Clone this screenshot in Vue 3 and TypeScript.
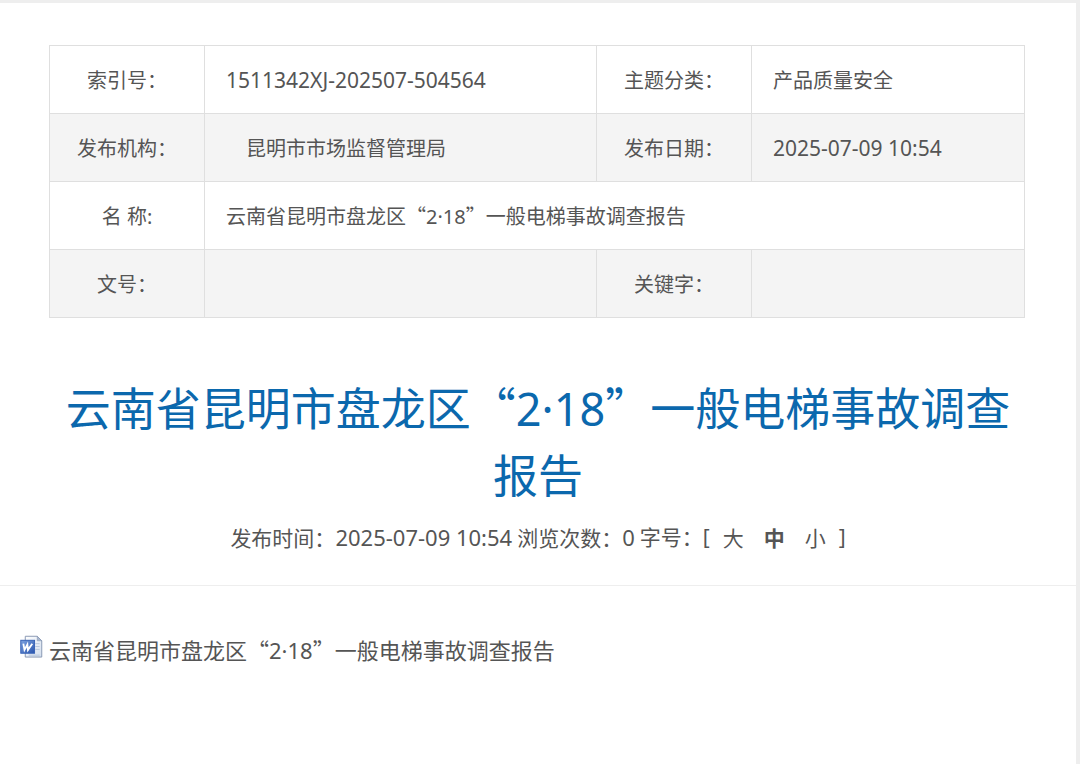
<script setup lang="ts">
import { ref } from 'vue'

interface TextPart {
  text: string
  quote?: boolean
}

// Curly quotes take the full-width form of the Chinese font.
const titleParts: TextPart[] = [
  { text: '云南省昆明市盘龙区' },
  { text: '“', quote: true },
  { text: '2·18' },
  { text: '”', quote: true },
  { text: '一般电梯事故调查' },
  { text: '报告' },
]

const sizes = ['大', '中', '小']
const currentSize = ref('中')
</script>

<template>
  <main class="page" lang="zh-CN">
    <table class="info">
      <colgroup>
        <col class="col-label" />
        <col class="col-wide" />
        <col class="col-label" />
        <col class="col-value" />
      </colgroup>
      <tbody>
        <tr>
          <th scope="row">索引号：</th>
          <td class="code">1511342XJ-202507-504564</td>
          <th scope="row">主题分类：</th>
          <td>产品质量安全</td>
        </tr>
        <tr>
          <th scope="row">发布机构：</th>
          <td class="indented">昆明市市场监督管理局</td>
          <th scope="row">发布日期：</th>
          <td class="code">2025-07-09 10:54</td>
        </tr>
        <tr>
          <th scope="row">名 称:</th>
          <td colspan="3">
            <span v-for="(part, i) in titleParts" :key="i" :class="{ quote: part.quote }">{{ part.text }}</span>
          </td>
        </tr>
        <tr>
          <th scope="row">文号：</th>
          <td></td>
          <th scope="row">关键字：</th>
          <td></td>
        </tr>
      </tbody>
    </table>

    <header class="heading">
      <h1>
        <span v-for="(part, i) in titleParts" :key="i" :class="{ quote: part.quote }">{{ part.text }}</span>
      </h1>
      <div class="meta">
        <span>发布时间：<span class="number">2025-07-09 10:54</span></span>
        <span>浏览次数：<span class="number">0</span></span>
        <span class="sizes">
          <span>字号：[</span>
          <span class="size-list">
            <button
              v-for="size in sizes"
              :key="size"
              type="button"
              :class="{ active: size === currentSize }"
              @click="currentSize = size"
            >{{ size }}</button>
          </span>
          <span>]</span>
        </span>
      </div>
    </header>

    <section class="content">
      <a class="attachment" href="#">
        <svg class="doc-icon" viewBox="0 0 24 24" aria-hidden="true">
          <defs>
            <linearGradient id="paper" x1="0" y1="0" x2="1" y2="1">
              <stop offset="0" stop-color="#ffffff" />
              <stop offset="1" stop-color="#d3deee" />
            </linearGradient>
            <linearGradient id="badge" x1="0" y1="0" x2="1" y2="1">
              <stop offset="0" stop-color="#7da3e0" />
              <stop offset="1" stop-color="#2a55ae" />
            </linearGradient>
          </defs>
          <path d="M5.500 .8H18l4.700 4.700V22.500H5.500z" fill="url(#paper)" stroke="#8797b2" />
          <path d="M18 .8v4.700h4.700z" fill="#a9b8cf" stroke="#8797b2" stroke-width=".6" />
          <path d="M16 8.500h4.500M16 11.500h4.500M16 14.500h4.500M9 20.500h11.500" stroke="#b6c5dd" />
          <rect x=".8" y="5" width="14.400" height="13.500" fill="url(#badge)" stroke="#3560b5" />
          <path d="M3.500 8.500l1.200 6.500 3-5.500.6 5.500L12.800 8.500" fill="none" stroke="#fff" stroke-width="1.900" />
        </svg>
        <span>
          <span v-for="(part, i) in titleParts" :key="i" :class="{ quote: part.quote }">{{ part.text }}</span>
        </span>
      </a>
    </section>
  </main>
</template>

<style>
body {
  background: #eeeeee;
}
</style>

<style scoped>
.page {
  box-sizing: border-box;
  min-height: calc(100vh - 3px);
  margin: 3px 4px 0 0;
  padding-top: 42px;
  display: flow-root;
  background: #fff;
  color: #555;
  font-family: "Noto Sans", "Noto Sans CJK SC", sans-serif;
  font-size: 20px;
}

.quote {
  font-family: "Noto Sans CJK SC", sans-serif;
}

.info {
  width: calc(100% - 100px);
  margin: 0 49px;
  border-collapse: collapse;
  table-layout: fixed;
  line-height: 28px;
}

.col-label {
  width: 15.9%;
}

.col-wide {
  width: 40.2%;
}

.info th,
.info td {
  height: 65px;
  padding: 2px 0 0;
  border: 1px solid #dfdfdf;
  font-weight: 400;
}

.info td {
  padding: 2px 21px 0;
}

.info td.code {
  padding-top: 0;
  font-size: 21px;
}

.info td.indented {
  padding-left: 41px;
}

.info tr:nth-child(even) {
  background: #f4f4f4;
}

.heading {
  margin-top: 55px;
  padding: 0 50px 31px;
  border-bottom: 1px solid #eee;
  text-align: center;
}

h1 {
  margin: 0;
  color: #0b68ad;
  font-size: 45px;
  font-weight: 400;
  line-height: 67px;
}

.meta {
  display: flex;
  justify-content: center;
  gap: 5px;
  margin-top: 12px;
  font-size: 21px;
  line-height: 32px;
}

.number {
  font-size: 22px;
}

.sizes {
  display: flex;
  gap: 13px;
}

.size-list {
  display: flex;
  gap: 20px;
}

.sizes button {
  padding: 0;
  border: 0;
  background: none;
  color: inherit;
  font: inherit;
  cursor: pointer;
}

.sizes button.active {
  font-weight: 700;
}

.content {
  padding: 49px 20px;
}

.attachment {
  display: flex;
  align-items: flex-start;
  gap: 6px;
  color: inherit;
  font-size: 22px;
  line-height: 28px;
  text-decoration: none;
}

.doc-icon {
  width: 23px;
  height: 24px;
}
</style>
